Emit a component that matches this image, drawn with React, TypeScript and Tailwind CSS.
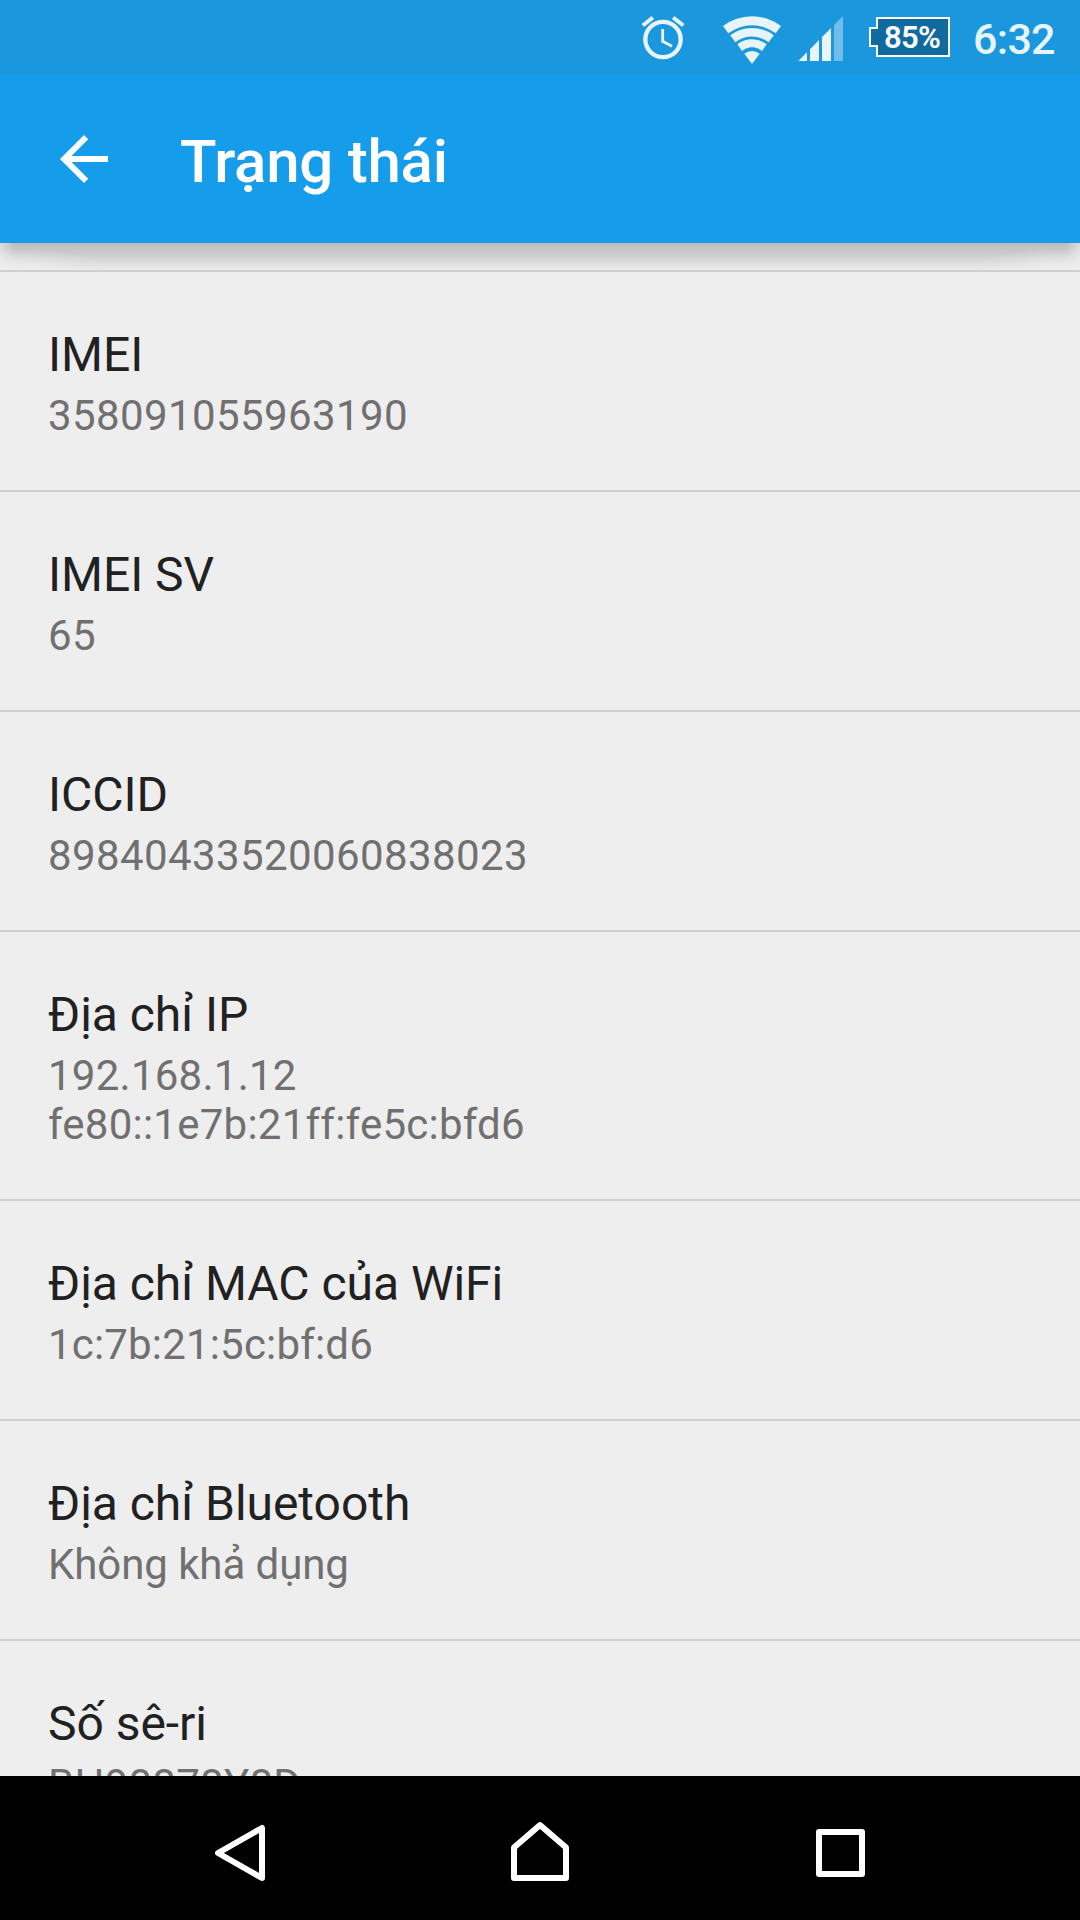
import React from "react";

type Line = { text: string; spacing: string };

const rows: { title: string; lines: Line[] }[] = [
  { title: "IMEI", lines: [{ text: "358091055963190", spacing: "tracking-[0.4px]" }] },
  { title: "IMEI SV", lines: [{ text: "65", spacing: "tracking-[0.4px]" }] },
  { title: "ICCID", lines: [{ text: "89840433520060838023", spacing: "tracking-[0.4px]" }] },
  {
    title: "Địa chỉ IP",
    lines: [
      { text: "192.168.1.12", spacing: "tracking-[0.25px]" },
      { text: "fe80::1e7b:21ff:fe5c:bfd6", spacing: "tracking-[0.24px]" },
    ],
  },
  { title: "Địa chỉ MAC của WiFi", lines: [{ text: "1c:7b:21:5c:bf:d6", spacing: "tracking-[0.18px]" }] },
  { title: "Địa chỉ Bluetooth", lines: [{ text: "Không khả dụng", spacing: "tracking-[-0.08px]" }] },
  { title: "Số sê-ri", lines: [{ text: "BH90878Y8D", spacing: "tracking-[0.25px]" }] },
];

function AlarmIcon() {
  return (
    <svg className="ml-[641px] mt-[15px] h-[45px] w-[44px] shrink-0" viewBox="63 45 132 135" fill="none" stroke="#e8f4fc">
      <circle cx="129" cy="118.5" r="53" strokeWidth="13" />
      <path d="M128 87V124L156 139" strokeWidth="8.5" />
      <path d="M68.5 76.500L98.500 52.500M159.500 52.500L190 76.500" strokeWidth="12" />
    </svg>
  );
}

function WifiIcon() {
  return (
    <svg className="ml-[38px] mt-[15px] h-[50px] w-[58px] shrink-0" viewBox="309 45 174 150" fill="#e8f4fc">
      <path d="M309 78A144 144 0 0 1 483 78L467 100A117 117 0 0 0 325 100Z" />
      <path d="M330.500 106A108 108 0 0 1 461.500 106L446 127A81 81 0 0 0 346 127Z" />
      <path d="M352 133A72 72 0 0 1 440 133L426 153A45 45 0 0 0 366 153Z" />
      <path d="M373 161A36 36 0 0 1 419 161L396 192Z" />
    </svg>
  );
}

function SignalIcon() {
  return (
    <svg className="ml-[17px] mt-4 h-[45px] w-[45px] shrink-0" viewBox="534 48 135 135" fill="#e8f4fc">
      <path d="M535 183L561 157V183ZM570 148L597 120V183H570ZM606 111L633 84V183H606Z" />
      <path d="M642 75L669 48V183H642Z" opacity="0.42" />
    </svg>
  );
}

function Battery() {
  return (
    <div className="relative ml-[26px] mt-[17px] h-10 w-[81px] shrink-0">
      <svg className="absolute inset-0 h-10 w-[81px]" viewBox="0 0 81 40">
        <path d="M8 1H80V39H8V29H1V11H8Z" fill="#116a9d" stroke="#fff" strokeWidth="2" />
      </svg>
      <span className="absolute left-[15px] top-px text-[31px] font-semibold leading-10 tracking-[-0.7px] text-white">85%</span>
    </div>
  );
}

export default function App() {
  return (
    <div
      className="flex h-[1920px] w-[1080px] flex-col overflow-hidden bg-[#eeeeee]"
      style={{ fontFamily: "Roboto, 'Noto Sans', sans-serif" }}
    >
      <div className="flex h-[75px] shrink-0 items-start bg-[#1a97dd]">
        <AlarmIcon />
        <WifiIcon />
        <SignalIcon />
        <Battery />
        <span className="ml-[23px] mt-[15px] text-[43px] font-medium leading-[48px] tracking-[-0.7px] text-[#e8f4fc]">6:32</span>
      </div>

      <header className="relative z-10 flex h-[168px] shrink-0 items-center bg-[#159ceb] pl-12">
        <svg className="h-[72px] w-[72px]" viewBox="0 0 24 24" fill="#fff">
          <path d="M20 11H7.830l5.590-5.590L12 4l-8 8 8 8 1.410-1.410L7.830 13H20v-2z" />
        </svg>
        <h1 className="ml-[60px] mt-[5px] text-[60px] font-medium leading-[70px] tracking-[-0.25px] text-white">Trạng thái</h1>
        <div className="absolute left-0 top-full h-[27px] w-full bg-[linear-gradient(to_bottom,#bdbdbd,#d0d0d0_50%,#ebebeb)]">
          <div className="absolute left-0 top-0 h-full w-full bg-[radial-gradient(110px_22px_at_0_100%,#eeeeee,#eeeeee00)]" />
          <div className="absolute left-0 top-0 h-full w-full bg-[radial-gradient(110px_22px_at_100%_100%,#eeeeee,#eeeeee00)]" />
          <div className="absolute left-0 top-0 h-full w-[14px] bg-[linear-gradient(to_right,#eeeeeeaa,#eeeeee00)]" />
          <div className="absolute right-0 top-0 h-full w-[14px] bg-[linear-gradient(to_left,#eeeeeeaa,#eeeeee00)]" />
        </div>
      </header>

      <main className="min-h-0 flex-1 overflow-hidden pt-[27px]">
        {rows.map((row) => (
          <section key={row.title} className="border-t-2 border-[#cfcfcf] px-12 pb-[50px] pt-[52px]">
            <h2 className="text-[48px] leading-[62px] tracking-[-0.03px] text-[#212121]">{row.title}</h2>
            <div className="pt-[5px] text-[42px] leading-[49px] text-[#707070]">
              {row.lines.map((line) => (
                <p key={line.text} className={line.spacing}>
                  {line.text}
                </p>
              ))}
            </div>
          </section>
        ))}
      </main>

      <nav className="relative z-10 flex h-36 shrink-0 items-center bg-black pl-[215px]">
        <svg className="mt-2 h-[64px] w-[50px]" viewBox="215 1820 50 64" fill="none" stroke="#fff" strokeWidth="6" strokeLinejoin="round">
          <path d="M218 1853L262 1828V1878Z" />
        </svg>
        <svg className="ml-[246px] mt-2 h-[64px] w-[58px]" viewBox="511 1820 58 64" fill="none" stroke="#fff" strokeWidth="6" strokeLinejoin="round">
          <path d="M540 1825L566 1847.500V1878H514V1847.500Z" />
        </svg>
        <svg className="ml-[247px] mt-2 h-[64px] w-[50px]" viewBox="816 1820 50 64" fill="none" stroke="#fff" strokeWidth="6" strokeLinejoin="round">
          <path d="M819 1832H862V1874H819Z" />
        </svg>
      </nav>
    </div>
  );
}
